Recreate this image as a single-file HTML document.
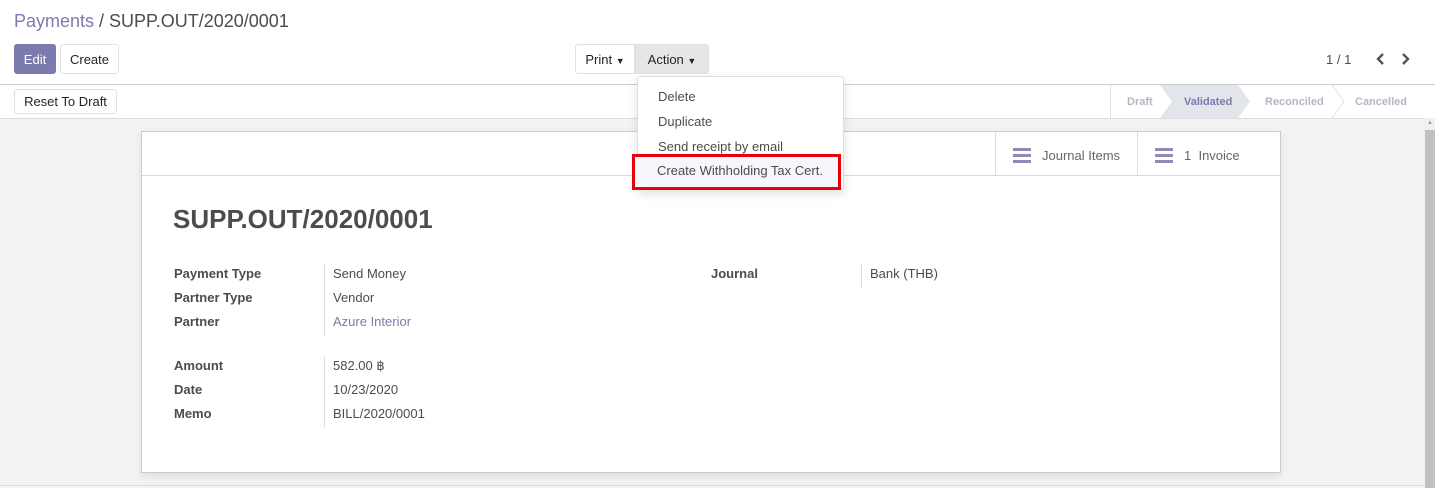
<!DOCTYPE html>
<html><head><meta charset="utf-8"><style>
*{box-sizing:border-box;margin:0;padding:0}
body{width:1435px;height:488px;position:relative;overflow:hidden;font-family:"Liberation Sans",sans-serif;font-size:13px;color:#4c4c4c;background:#fff}
.a{position:absolute}
.btn{position:absolute;border:1px solid #dee2e6;border-radius:3px;background:#fff;color:#212529;font-size:13px;text-align:center}
.lbl{position:absolute;font-weight:bold;color:#4c4c4c}
.val{position:absolute;color:#4c4c4c}
.menu div{position:absolute;left:20px;color:#4c4c4c;font-size:13px}
.bar{position:absolute;width:18px;height:3px;background:#8f8bb8}
</style></head><body>
<div class="a" style="left:14px;top:11px;font-size:18px;color:#4c4c4c"><span style="color:#7c7bad">Payments</span> / SUPP.OUT/2020/0001</div>
<div class="btn" style="left:14px;top:44px;width:42px;height:30px;line-height:29px;background:#7c7bad;border-color:#7c7bad;color:#fff">Edit</div>
<div class="btn" style="left:60px;top:44px;width:59px;height:30px;line-height:29px">Create</div>
<div class="btn" style="left:575px;top:44px;width:60px;height:30px;line-height:29px;border-radius:3px 0 0 3px">Print <span style="font-size:9px">▼</span></div>
<div class="btn" style="left:635px;top:44px;width:74px;height:30px;line-height:29px;background:#e6e6e6;border-color:#e0e0e0;border-radius:0 3px 3px 0">Action <span style="font-size:9px">▼</span></div>
<div class="a" style="left:1326px;top:52px;color:#4c4c4c">1 / 1</div>
<svg class="a" style="left:1374px;top:52px" width="44" height="14"><path d="M9 2L4 7L9 12M29 2L34 7L29 12" stroke="#555" stroke-width="2.4" fill="none"/></svg>
<div class="a" style="left:0;top:84px;width:1435px;height:1px;background:#ccc"></div>
<div class="btn" style="left:14px;top:89px;width:103px;height:25px;line-height:23px">Reset To Draft</div>
<div class="a" style="left:1110px;top:85px;width:325px;height:33px;border-left:1px solid #e0e0e0"></div>
<svg class="a" style="left:1110px;top:85px" width="325" height="33"><polygon points="50,0 128,0 140,16.5 128,33 50,33 62,16.5" fill="#e2e6ea"/><path d="M222 0L234 16.5L222 33" stroke="#e0e0e0" fill="none"/></svg>
<div class="a" style="left:1127px;top:96px;font-size:11px;font-weight:bold;color:#b5b5c3">Draft</div>
<div class="a" style="left:1184px;top:96px;font-size:11px;font-weight:bold;color:#7c7bad">Validated</div>
<div class="a" style="left:1265px;top:96px;font-size:11px;font-weight:bold;color:#b5b5c3">Reconciled</div>
<div class="a" style="left:1355px;top:96px;font-size:11px;font-weight:bold;color:#b5b5c3">Cancelled</div>
<div class="a" style="left:0;top:118px;width:1424px;height:370px;background:#f3f3f3;border-top:1px solid #ddd"></div>
<div class="a" style="left:0;top:485px;width:1424px;height:1px;background:#ddd"></div>
<div class="a" style="left:1424px;top:118px;width:11px;height:370px;background:#f1f1f1"></div>
<div class="a" style="left:1425px;top:130px;width:10px;height:358px;background:#c1c1c1"></div>
<div class="a" style="left:1427px;top:120px;font-size:6px;color:#999">▲</div>
<div class="a" style="left:141px;top:131px;width:1140px;height:342px;background:#fff;border:1px solid #ccc;box-shadow:0 4px 8px rgba(0,0,0,.08)"></div>
<div class="a" style="left:142px;top:175px;width:1138px;height:1px;background:#d8d8e0"></div>
<div class="a" style="left:995px;top:132px;width:1px;height:43px;background:#ddd"></div>
<div class="a" style="left:1137px;top:132px;width:1px;height:43px;background:#ddd"></div>
<div class="bar" style="left:1013px;top:148px"></div><div class="bar" style="left:1013px;top:154px"></div><div class="bar" style="left:1013px;top:160px"></div>
<div class="a" style="left:1042px;top:148px;color:#666">Journal Items</div>
<div class="bar" style="left:1155px;top:148px"></div><div class="bar" style="left:1155px;top:154px"></div><div class="bar" style="left:1155px;top:160px"></div>
<div class="a" style="left:1184px;top:148px;color:#666">1&nbsp; Invoice</div>
<div class="a" style="left:173px;top:204px;font-size:26px;font-weight:bold;color:#4c4c4c">SUPP.OUT/2020/0001</div>
<div class="lbl" style="left:174px;top:266px">Payment Type</div>
<div class="lbl" style="left:174px;top:290px">Partner Type</div>
<div class="lbl" style="left:174px;top:314px">Partner</div>
<div class="lbl" style="left:174px;top:358px">Amount</div>
<div class="lbl" style="left:174px;top:382px">Date</div>
<div class="lbl" style="left:174px;top:406px">Memo</div>
<div class="a" style="left:324px;top:264px;width:1px;height:72px;background:#ddd"></div>
<div class="a" style="left:324px;top:356px;width:1px;height:72px;background:#ddd"></div>
<div class="val" style="left:333px;top:266px">Send Money</div>
<div class="val" style="left:333px;top:290px">Vendor</div>
<div class="val" style="left:333px;top:314px;color:#7c7bad">Azure Interior</div>
<div class="val" style="left:333px;top:358px">582.00 ฿</div>
<div class="val" style="left:333px;top:382px">10/23/2020</div>
<div class="val" style="left:333px;top:406px">BILL/2020/0001</div>
<div class="lbl" style="left:711px;top:266px">Journal</div>
<div class="a" style="left:861px;top:264px;width:1px;height:24px;background:#ddd"></div>
<div class="val" style="left:870px;top:266px">Bank (THB)</div>
<div class="a menu" style="left:637px;top:76px;width:207px;height:114px;background:#fff;border:1px solid #ddd;border-radius:3px;box-shadow:0 4px 10px rgba(0,0,0,.12)">
<div style="top:12px">Delete</div>
<div style="top:37px">Duplicate</div>
<div style="top:62px">Send receipt by email</div>
</div>
<div class="a" style="left:632px;top:154px;width:209px;height:36px;border:3px solid #e8000b;background:#f6f7fc"></div>
<div class="a" style="left:657px;top:163px;color:#4c4c4c">Create Withholding Tax Cert.</div>
</body></html>
